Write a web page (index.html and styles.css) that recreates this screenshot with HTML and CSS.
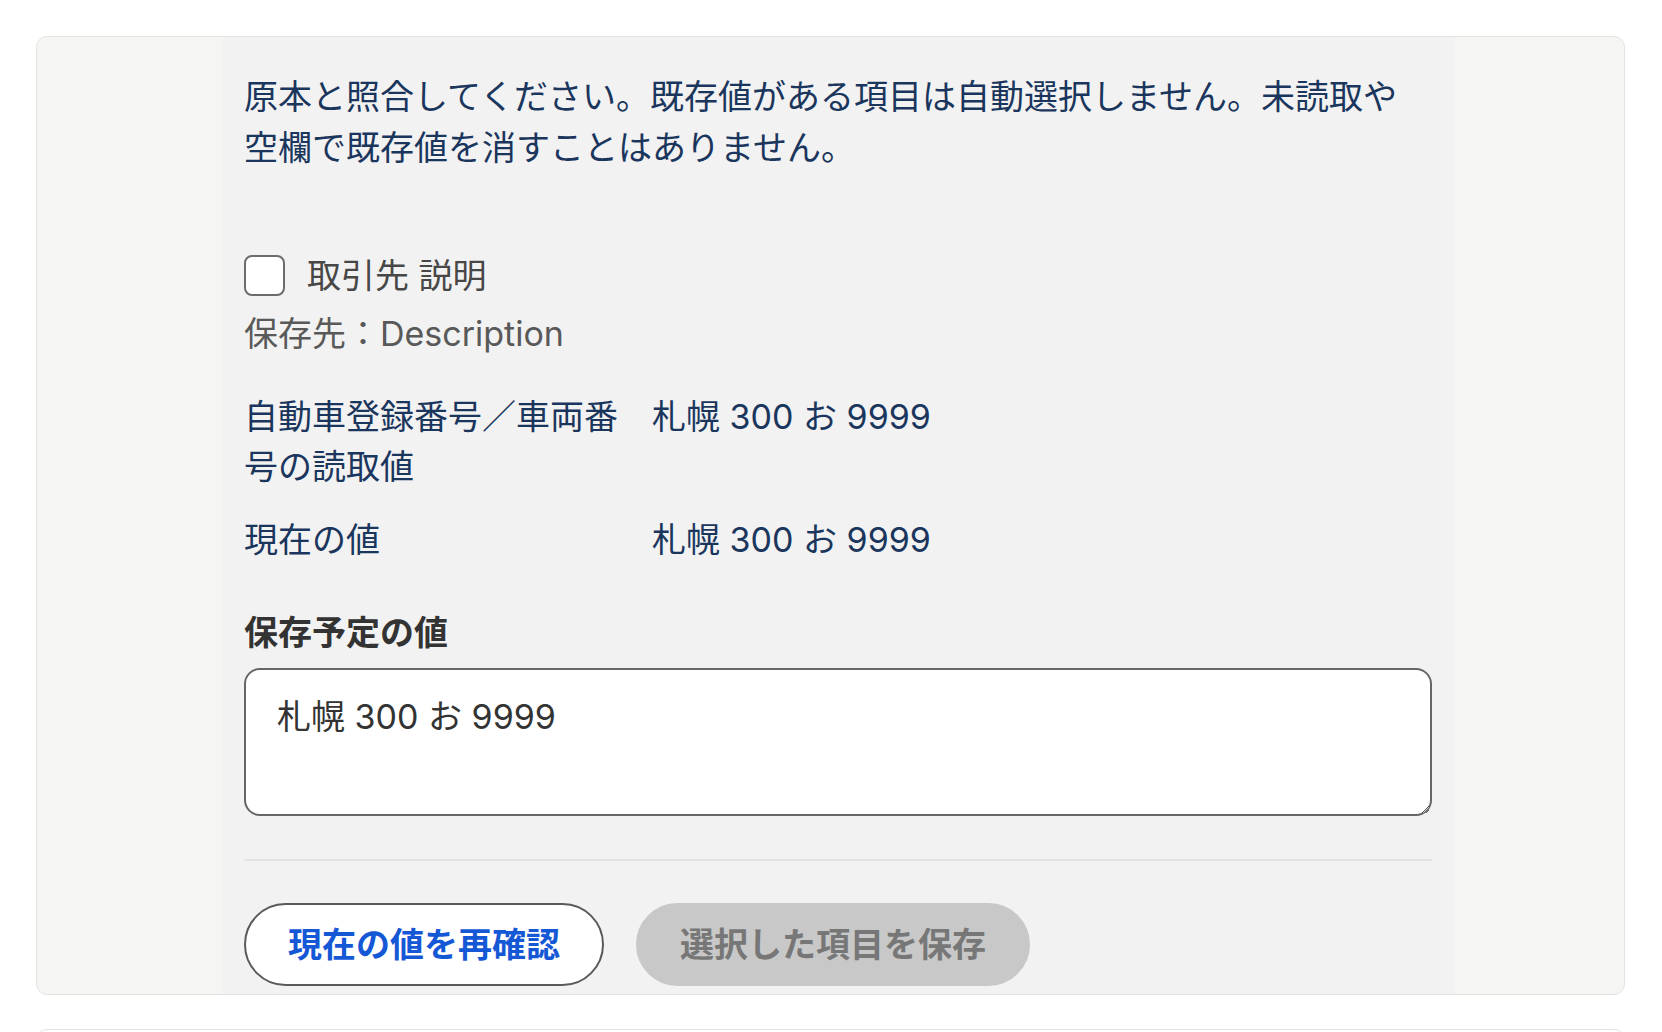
FILE: index.html
```html
<!DOCTYPE html>
<html lang="ja">
<head>
<meta charset="utf-8">
<title>照合</title>
<link rel="stylesheet" href="styles.css">
</head>
<body>
<section class="card">
  <div class="panel">
    <p class="intro">原本と照合してください。既存値がある項目は自動選択しません。未読取や空欄で既存値を消すことはありません。</p>

    <label class="check-row">
      <input type="checkbox" class="check">
      <span class="check-label">取引先 説明</span>
    </label>
    <p class="dest">保存先：Description</p>

    <dl class="compare">
      <dt>自動車登録番号／車両番号の読取値</dt>
      <dd>札幌 300 お 9999</dd>
      <dt>現在の値</dt>
      <dd>札幌 300 お 9999</dd>
    </dl>

    <h3 class="field-title">保存予定の値</h3>
    <textarea class="value-input">札幌 300 お 9999</textarea>

    <hr class="divider">

    <div class="actions">
      <button class="btn btn-outline" type="button">現在の値を再確認</button>
      <button class="btn btn-disabled" type="button" disabled>選択した項目を保存</button>
    </div>
  </div>
</section>
<section class="card next"></section>
</body>
</html>
```

FILE: styles.css
```css
* {
  box-sizing: border-box;
}

html, body {
  margin: 0;
  padding: 0;
  background: #ffffff;
}

body {
  font-family: "Inter", "Noto Sans CJK JP", "Noto Sans", sans-serif;
  font-size: 34px;
  line-height: 51px;
  color: #1b365d;
  padding: 36px 37px 0 36px;
  overflow: hidden;
  height: 1032px;
}

.card {
  height: 959px;
  border: 1px solid #e4e3de;
  border-radius: 11px;
  background: #f5f5f4;
  overflow: hidden;
  display: flex;
}

.card.next {
  margin-top: 34px;
  height: 200px;
  background: #ffffff;
}

.panel {
  margin-left: 186px;
  width: 1232px;
  background: #f2f2f2;
  padding: 34px 23px 0 21px;
}

.intro {
  margin: 0;
  max-width: 1175px;
}

.check-row {
  display: flex;
  align-items: center;
  gap: 22px;
  margin-top: 77px;
  height: 51px;
  color: #474747;
}

.check {
  appearance: none;
  -webkit-appearance: none;
  margin: 0;
  width: 41px;
  height: 41px;
  border: 2px solid #6c6c6c;
  border-radius: 8px;
  background: #ffffff;
}

.dest {
  margin: 7px 0 0;
  color: #595959;
}

.compare {
  display: grid;
  grid-template-columns: 380px 1fr;
  column-gap: 28px;
  row-gap: 23px;
  margin: 33px 0 0;
  line-height: 50px;
}

.compare dt,
.compare dd {
  margin: 0;
}

.field-title {
  margin: 42px 0 0;
  font-size: 34px;
  line-height: 51px;
  font-weight: 700;
  color: #333333;
}

.value-input {
  display: block;
  width: 100%;
  height: 148px;
  margin-top: 10px;
  padding: 21px 31px;
  border: 2px solid #666666;
  border-radius: 16px;
  background: #ffffff;
  font-family: inherit;
  font-size: 34px;
  line-height: 51px;
  color: #333333;
}

.divider {
  margin: 43px 0 0;
  border: 0;
  border-top: 2px solid #e4e4e4;
}

.actions {
  display: flex;
  gap: 32px;
  margin-top: 42px;
}

.btn {
  height: 83px;
  padding: 0 42px;
  border-radius: 999px;
  font-family: inherit;
  font-size: 34px;
  font-weight: 700;
  line-height: 1;
}

.btn-outline {
  border: 2px solid #5a5a5a;
  background: #ffffff;
  color: #1558d6;
}

.btn-disabled {
  border: 2px solid #c8c8c8;
  background: #c8c8c8;
  color: #777777;
}
```
